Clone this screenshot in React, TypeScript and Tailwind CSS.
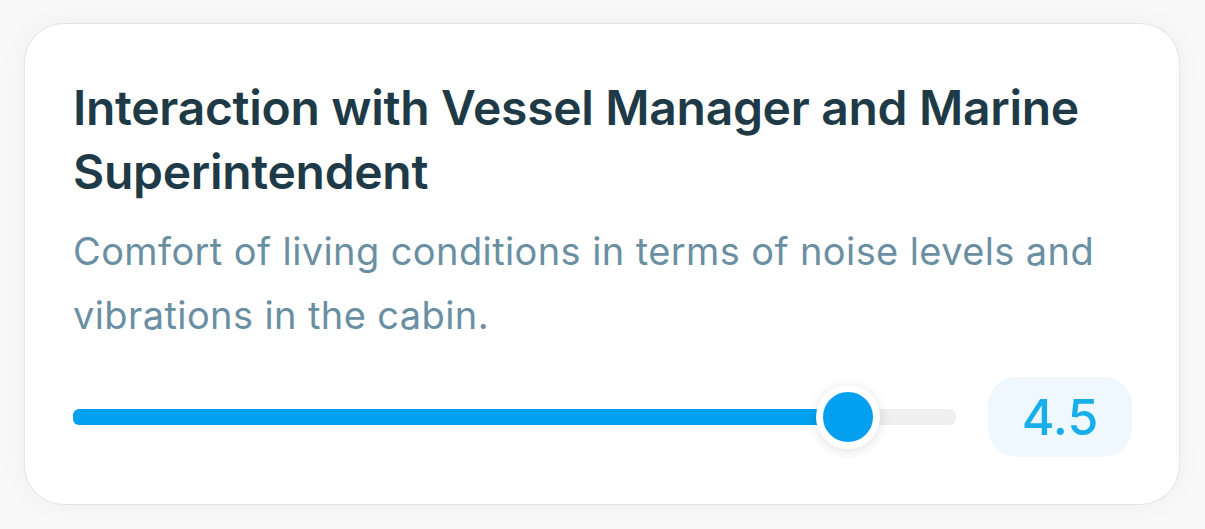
export default function App() {
  const value = 4.5;
  const pct = 87.8;

  return (
    <div className="min-h-screen w-full bg-[#f9f9f9] pl-[24px] pr-[25px] pt-[23px] pb-[26px]" style={{ fontFamily: "Inter, 'Noto Sans', sans-serif" }}>
      <div className="bg-white border border-[#e4e4e7] rounded-[40px] shadow-[0_0_28px_rgba(0,0,0,0.05)] pl-[48px] pr-[47px] pt-[52px] pb-[47px]">
        <h1 className="text-[48px] leading-[64px] font-semibold text-[#1e3a47] tracking-[-0.3px]">
          Interaction with Vessel Manager and Marine Superintendent
        </h1>
        <p className="mt-[15px] text-[38px] leading-[64px] text-[#6a8fa3] tracking-[0.4px]">
          Comfort of living conditions in terms of noise levels and vibrations in the cabin.
        </p>

        <div className="mt-[30px] flex items-center gap-[32px]">
          <div className="relative flex-1 h-[16px] rounded-[6px] bg-[#efefef]">
            <div className="absolute left-0 top-0 h-full rounded-[6px] bg-[#03a0f0]" style={{ width: `${pct}%` }} />
            <div
              className="absolute top-1/2 w-[64px] h-[64px] -translate-x-1/2 -translate-y-1/2 rounded-full bg-[#03a0f0] border-[7px] border-white shadow-[0_2px_12px_rgba(0,0,0,0.12)]"
              style={{ left: `${pct}%` }}
            />
          </div>
          <div className="w-[144px] h-[80px] rounded-[28px] bg-[#eff8fe] flex items-center justify-center text-[50px] font-medium text-[#18aee9]">
            {value}
          </div>
        </div>
      </div>
    </div>
  );
}
